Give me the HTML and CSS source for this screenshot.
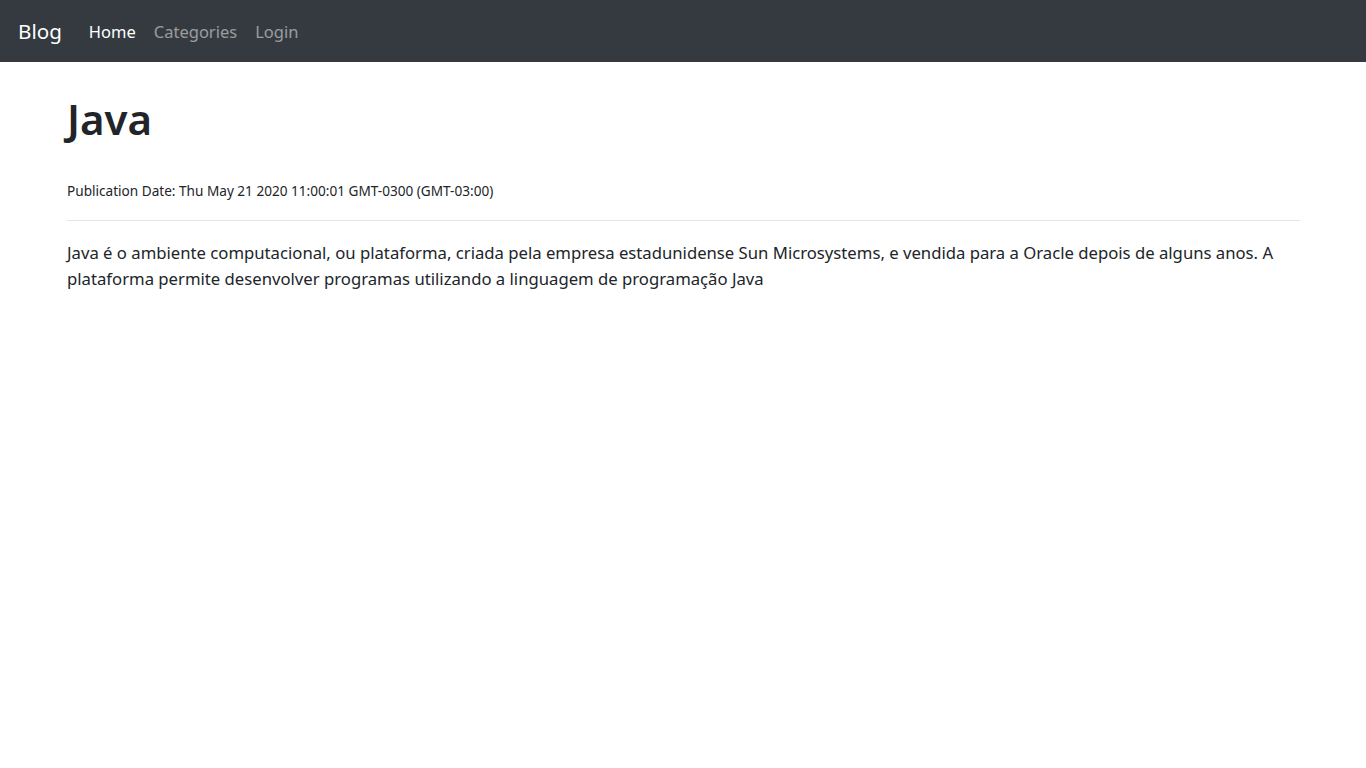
FILE: index.html
```html
<!DOCTYPE html>
<html lang="pt">
<head>
<meta charset="utf-8">
<title>Blog</title>
<link rel="stylesheet" href="styles.css">
</head>
<body>
<nav class="navbar">
  <a class="brand" href="#">Blog</a>
  <ul class="nav">
    <li><a class="nav-link active" href="#">Home</a></li>
    <li><a class="nav-link" href="#">Categories</a></li>
    <li><a class="nav-link" href="#">Login</a></li>
  </ul>
</nav>
<main class="content">
  <h1 class="title">Java</h1>
  <p class="date">Publication Date: Thu May 21 2020 11:00:01 GMT-0300 (GMT-03:00)</p>
  <hr class="divider">
  <p class="body-text">Java é o ambiente computacional, ou plataforma, criada pela empresa estadunidense Sun Microsystems, e vendida para a Oracle depois de alguns anos. A plataforma permite desenvolver programas utilizando a linguagem de programação Java</p>
</main>
</body>
</html>
```
FILE: styles.css
```css
* { box-sizing: border-box; }
html, body { margin: 0; padding: 0; }
body {
  font-family: "Noto Sans", "Open Sans", sans-serif;
  color: #212529;
  background: #fff;
}
.navbar {
  height: 62px;
  background: #343a40;
  display: flex;
  align-items: center;
  padding: 0 18px;
}
.brand {
  color: #fff;
  text-decoration: none;
  font-size: 20.6px;
  margin-right: 18px;
}
.nav {
  list-style: none;
  display: flex;
  margin: 0;
  padding: 0;
}
.nav-link {
  display: block;
  padding: 0 9px;
  font-size: 16.5px;
  color: rgba(255,255,255,.5);
  text-decoration: none;
}
.nav-link.active { color: #fff; }
.content {
  padding: 30px 66px 0 67px;
}
.title {
  margin: 0;
  font-size: 42px;
  font-weight: 600;
  line-height: 53px;
}
.date {
  margin: 36px 0 0;
  font-size: 13.6px;
  line-height: 20px;
}
.divider {
  border: 0;
  border-top: 1px solid rgba(0,0,0,.1);
  margin: 19px 0 19px;
}
.body-text {
  margin: 0;
  font-size: 16.7px;
  line-height: 26px;
}
```
